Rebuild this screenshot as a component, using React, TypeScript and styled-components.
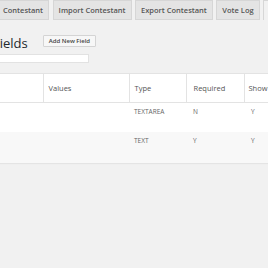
import styled, { createGlobalStyle } from 'styled-components';

const GlobalStyle = createGlobalStyle`
  html, body {
    margin: 0;
    padding: 0;
    background: #f1f1f1;
    overflow: hidden;
    font-family: "Open Sans", "DejaVu Sans", sans-serif;
  }
`;

const tabs = [
  { label: 'Contestant', first: true },
  { label: 'Import Contestant' },
  { label: 'Export Contestant' },
  { label: 'Vote Log' },
  { label: 'Contest Fields', active: true },
];

const columns = [
  { title: '', width: 43, pad: 5 },
  { title: 'Values', width: 86, pad: 5 },
  { title: 'Type', width: 57, pad: 5 },
  { title: 'Required', width: 58, pad: 7 },
  { title: 'Show', width: 70, pad: 4 },
];

const rows = [
  { values: '', type: 'TEXTAREA', required: 'N', show: 'Y' },
  { values: '', type: 'TEXT', required: 'Y', show: 'Y' },
];

const App = () => {
  return (
    <Page>
      <GlobalStyle />
      <TabBar>
        {tabs.map((t) => (
          <Tab key={t.label} $first={t.first} $active={t.active}>
            {t.label}
          </Tab>
        ))}
      </TabBar>

      <TitleRow>
        <Title>Fields</Title>
        <AddButton>Add New Field</AddButton>
      </TitleRow>
      <SearchInput />

      <FieldTable>
        <colgroup>
          {columns.map((c, i) => (
            <col key={i} style={{ width: c.width }} />
          ))}
        </colgroup>
        <thead>
          <tr>
            {columns.map((c, i) => (
              <HeadCell key={i} $pad={c.pad}>{c.title}</HeadCell>
            ))}
          </tr>
        </thead>
        <tbody>
          {rows.map((r, i) => (
            <Row key={i} $alt={i % 2 === 1}>
              <Cell />
              <Cell>{r.values}</Cell>
              <Cell>{r.type}</Cell>
              <Cell $pad={7}>{r.required}</Cell>
              <Cell $pad={7}>{r.show}</Cell>
            </Row>
          ))}
        </tbody>
      </FieldTable>
    </Page>
  );
};

export default App;

const Page = styled.div`
  width: 268px;
  height: 268px;
  display: flex;
  flex-direction: column;
`;

const TabBar = styled.div`
  display: flex;
  gap: 3.5px;
  height: 20px;
  white-space: nowrap;
`;

const Tab = styled.div<{ $first?: boolean; $active?: boolean }>`
  height: 20px;
  line-height: 19px;
  box-sizing: border-box;
  padding: 0 5px 0 ${(p) => (p.$first ? '3px' : '5px')};
  font-size: 7.5px;
  font-weight: 600;
  color: ${(p) => (p.$active ? '#222' : '#555')};
  background: ${(p) => (p.$active ? '#f1f1f1' : '#e4e4e4')};
  border: 1px solid #d6d6d6;
  border-left: ${(p) => (p.$first ? 'none' : '1px solid #d6d6d6')};
  border-bottom: ${(p) => (p.$active ? 'none' : '1px solid #d6d6d6')};
`;

const TitleRow = styled.div`
  display: flex;
  align-items: center;
  gap: 15px;
  margin-top: 15px;
  height: 12px;
`;

const Title = styled.h2`
  margin: 4px 0 0 -7px;
  font-size: 13px;
  font-weight: 400;
  color: #23282d;
  line-height: 12px;
`;

const AddButton = styled.button`
  height: 12px;
  padding: 0 5px;
  font-family: "Open Sans", sans-serif;
  font-size: 6px;
  font-weight: 600;
  color: #444;
  background: #f7f7f7;
  border: 1px solid #d4d4d4;
  border-radius: 1px;
  line-height: 10px;
`;

const SearchInput = styled.div`
  width: 89px;
  height: 9px;
  margin-top: 7px;
  background: #fff;
  border: 1px solid #e2e2e2;
  border-left: none;
  box-sizing: border-box;
`;

const FieldTable = styled.table`
  margin-top: 10px;
  width: 314px;
  table-layout: fixed;
  border-collapse: collapse;
  background: #fff;
  border-top: 1px solid #e3e3e3;
  box-shadow: 0 1px 1px rgba(0, 0, 0, 0.05);
`;

const HeadCell = styled.th<{ $pad: number }>`
  height: 28px;
  padding: 0 4px 0 ${(p) => p.$pad}px;
  text-align: left;
  font-size: 7.5px;
  font-weight: 400;
  color: #555;
  border-right: 1px solid #e3e3e3;
  border-bottom: 1px solid #e3e3e3;
`;

const Row = styled.tr<{ $alt?: boolean }>`
  background: ${(p) => (p.$alt ? '#f8f8f8' : '#fff')};
  height: ${(p) => (p.$alt ? '31px' : '29px')};
`;

const Cell = styled.td<{ $pad?: number }>`
  vertical-align: top;
  padding: 4px 5px 0 ${(p) => (p.$pad ?? 5)}px;
  font-size: 6.5px;
  color: #666;
`;
